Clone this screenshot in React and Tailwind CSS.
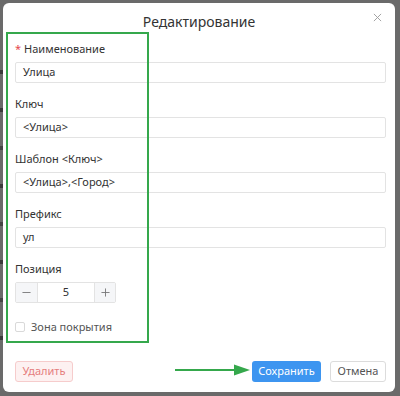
import React from "react";

function Field({ label, value, required }) {
  return (
    <div className="flex flex-col">
      <div className="h-[16px] leading-[16px] text-[11px] text-[#333] mb-[5px]">
        {required && <span className="text-[#e5484d] mr-[3px]">*</span>}
        {label}
      </div>
      <div className="h-[21px] border border-[#e3e3e3] rounded-[2px] bg-white flex items-center px-[7px] text-[11px] text-[#333]">
        {value}
      </div>
    </div>
  );
}

export default function App() {
  return (
    <div
      className="relative w-[400px] h-[396px] bg-[#6a6a6a] overflow-hidden pt-[3px] pl-[3px] pr-[5px] pb-[4px]"
      style={{ fontFamily: '"Noto Sans", "Open Sans", sans-serif' }}
    >
      {/* faint underlying page marks on left edge */}
      <div className="absolute left-0 top-0 w-[3px] h-full flex flex-col gap-[34px] pt-[70px]">
        <div className="h-[4px] w-[3px] bg-[#3a3a3a]" />
        <div className="h-[4px] w-[3px] bg-[#3a3a3a]" />
        <div className="h-[4px] w-[3px] bg-[#444]" />
        <div className="h-[4px] w-[3px] bg-[#3a3a3a]" />
        <div className="h-[4px] w-[3px] bg-[#444]" />
        <div className="h-[4px] w-[3px] bg-[#3a3a3a]" />
        <div className="h-[4px] w-[3px] bg-[#444]" />
        <div className="h-[4px] w-[3px] bg-[#3a3a3a]" />
      </div>

      <div className="relative h-full bg-white rounded-[6px] flex flex-col">
        {/* header */}
        <div className="relative h-[38px] flex items-center justify-center">
          <div className="text-[14px] text-[#333] leading-[20px]">Редактирование</div>
          <svg
            className="absolute right-[13px] top-[10px]"
            width="9"
            height="9"
            viewBox="0 0 10 10"
            fill="none"
            stroke="#9a9a9a"
            strokeWidth="1"
          >
            <path d="M1 1L9 9M9 1L1 9" />
          </svg>
        </div>

        {/* body */}
        <div className="flex flex-col pl-[12px] pr-[9px] gap-[13px]">
          <Field label="Наименование" value="Улица" required />
          <Field label="Ключ" value="<Улица>" />
          <Field label="Шаблон <Ключ>" value="<Улица>,<Город>" />
          <Field label="Префикс" value="ул" />
          <div className="flex flex-col">
            <div className="h-[16px] leading-[16px] text-[11px] text-[#333] mb-[5px]">Позиция</div>
            <div className="flex h-[21px] w-[101px] border border-[#e3e3e3] rounded-[2px] overflow-hidden">
              <div className="w-[22px] bg-[#f5f6f8] border-r border-[#e3e3e3] flex items-center justify-center">
                <svg width="9" height="9" viewBox="0 0 10 10" stroke="#777" strokeWidth="1">
                  <path d="M0.5 5H9.5" />
                </svg>
              </div>
              <div className="flex-1 flex items-center justify-center text-[11px] text-[#333]">5</div>
              <div className="w-[21px] bg-[#f5f6f8] border-l border-[#e3e3e3] flex items-center justify-center">
                <svg width="9" height="9" viewBox="0 0 10 10" stroke="#777" strokeWidth="1">
                  <path d="M0.5 5H9.5M5 0.5V9.5" />
                </svg>
              </div>
            </div>
          </div>
          <div className="flex items-center h-[16px] mt-[3px] gap-[6px]">
            <div className="w-[10px] h-[10px] border border-[#d9d9d9] rounded-[2px] bg-white" />
            <div className="text-[11px] text-[#555]">Зона покрытия</div>
          </div>
        </div>

        <div className="flex-1" />

        {/* footer */}
        <div className="flex items-center pl-[12px] pr-[9px] pb-[10px]">
          <div className="h-[21px] w-[58px] flex items-center justify-center rounded-[3px] border border-[#f6cccc] bg-[#fdf1f1] text-[11px] text-[#e57e7e]">
            Удалить
          </div>
          <div className="flex-1" />
          <div className="h-[21px] w-[69px] flex items-center justify-center rounded-[3px] bg-[#3d95f0] text-[11px] text-white">
            Сохранить
          </div>
          <div className="h-[21px] w-[56px] ml-[9px] flex items-center justify-center rounded-[3px] border border-[#dcdcdc] bg-white text-[11px] text-[#555]">
            Отмена
          </div>
        </div>
      </div>

      {/* annotation: green box */}
      <div className="absolute left-[6px] top-[32px] w-[143px] h-[311px] border-2 border-[#35a84c] pointer-events-none" />

      {/* annotation: arrow */}
      <svg className="absolute left-[174px] top-[362px]" width="78" height="16" viewBox="0 0 78 16">
        <path d="M1 8H62" stroke="#35a84c" strokeWidth="2" />
        <path d="M60 2.5L76 8L60 13.5Z" fill="#35a84c" />
      </svg>
    </div>
  );
}
